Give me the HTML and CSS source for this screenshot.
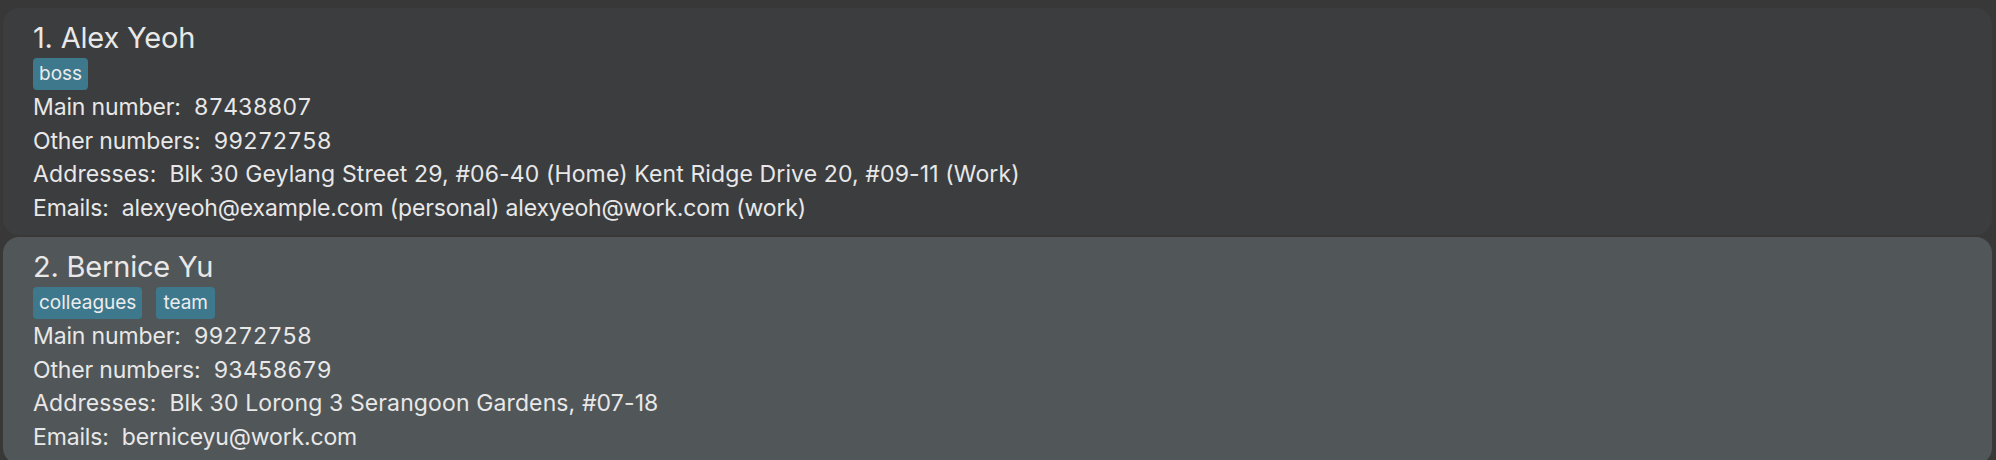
FILE: index.html
```html
<!DOCTYPE html>
<html>
<head>
<meta charset="utf-8">
<link rel="stylesheet" href="styles.css">
</head>
<body>
<div class="list">
  <div class="card card-odd">
    <div class="name">1. Alex Yeoh</div>
    <div class="tags"><span class="tag">boss</span></div>
    <div class="row"><span class="label">Main number:</span><span class="num">87438807</span></div>
    <div class="row"><span class="label">Other numbers:</span><span class="num">99272758</span></div>
    <div class="row addr"><span class="label">Addresses:</span><span>Blk 30 Geylang Street 29, #06-40 (Home) Kent Ridge Drive 20, #09-11 (Work)</span></div>
    <div class="row"><span class="label">Emails:</span><span>alexyeoh@example.com (personal) alexyeoh@work.com (work)</span></div>
  </div>
  <div class="card card-even">
    <div class="name">2. Bernice Yu</div>
    <div class="tags"><span class="tag">colleagues</span><span class="tag">team</span></div>
    <div class="row"><span class="label">Main number:</span><span class="num">99272758</span></div>
    <div class="row"><span class="label">Other numbers:</span><span class="num">93458679</span></div>
    <div class="row addr"><span class="label">Addresses:</span><span>Blk 30 Lorong 3 Serangoon Gardens, #07-18</span></div>
    <div class="row"><span class="label">Emails:</span><span>berniceyu@work.com</span></div>
  </div>
</div>
</body>
</html>
```

FILE: styles.css
```css
html, body {
  margin: 0;
  padding: 0;
  background: #383838;
  overflow: hidden;
}
body {
  font-family: Inter, "Noto Sans", sans-serif;
  color: #e8e8e8;
}
.list {
  display: flex;
  flex-direction: column;
  gap: 2px;
  padding: 8px 4px 0 3px;
}
.card {
  border-radius: 16px;
  padding: 14px 30px 10px 30px;
}
.card-odd {
  background: #3c3d3f;
}
.card-even {
  background: #515658;
}
.name {
  font-size: 29px;
  line-height: 31.5px;
  margin-bottom: 4.5px;
  letter-spacing: -0.2px;
}
.tags {
  display: flex;
  gap: 14px;
  margin-bottom: 1px;
}
.tag {
  background: #3d788c;
  border-radius: 4px;
  height: 32px;
  line-height: 32px;
  padding: 0 6px;
  font-size: 19px;
  color: #ececec;
}
.tag + .tag {
  padding: 0 7px;
}
.row {
  font-size: 23px;
  line-height: 33.5px;
  display: flex;
  gap: 13px;
  white-space: nowrap;
  letter-spacing: -0.15px;
}
.num {
  font-variant-numeric: tabular-nums;
}
.addr {
  letter-spacing: 0.12px;
}
```
